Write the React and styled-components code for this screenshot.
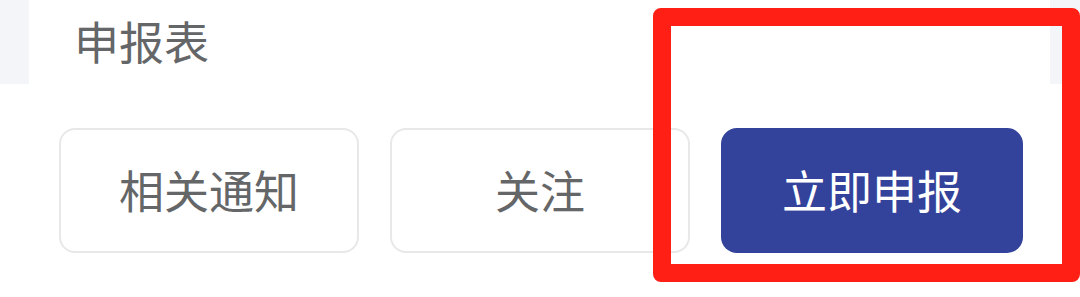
import styled, { createGlobalStyle } from "styled-components";

const Global = createGlobalStyle`
html,body{margin:0;padding:0;background:#fff;}
body{font-family:"Noto Sans CJK SC","Noto Sans",sans-serif;}
`;

const Page = styled.div`
position:relative;
width:1080px;
height:297px;
overflow:hidden;
background:#fff;
`;

const Top = styled.div`
background:#f3f5f9;
padding:0 30px 0 29px;
`;

const TitleCard = styled.div`
height:84px;
background:#fff;
display:flex;
align-items:center;
padding:0 0 4px 45px;
box-sizing:border-box;
font-size:45px;
color:#646668;
`;

const Actions = styled.div`
display:flex;
gap:31px;
padding:44px 0 0 59px;
`;

const Btn = styled.div`
width:${p => p.w || 300}px;
height:125px;
box-sizing:border-box;
border-radius:16px;
display:flex;
align-items:center;
justify-content:center;
font-size:45px;
padding-bottom:2px;
color:${p => p.primary ? "#fff" : "#646668"};
background:${p => p.primary ? "#33429a" : "#fff"};
border:${p => p.primary ? "none" : "2px solid #e8e8e8"};
`;

const Mark = styled.div`
position:absolute;
left:653px;
top:8px;
width:427px;
height:274px;
box-sizing:border-box;
border:18px solid #ff1f14;
border-radius:8px;
`;

export default function App(){
	return(
		<Page>
			<Global/>
			<Top><TitleCard>申报表</TitleCard></Top>
			<Actions>
				<Btn>相关通知</Btn>
				<Btn>关注</Btn>
				<Btn primary w={302}>立即申报</Btn>
			</Actions>
			<Mark/>
		</Page>
	)
}
